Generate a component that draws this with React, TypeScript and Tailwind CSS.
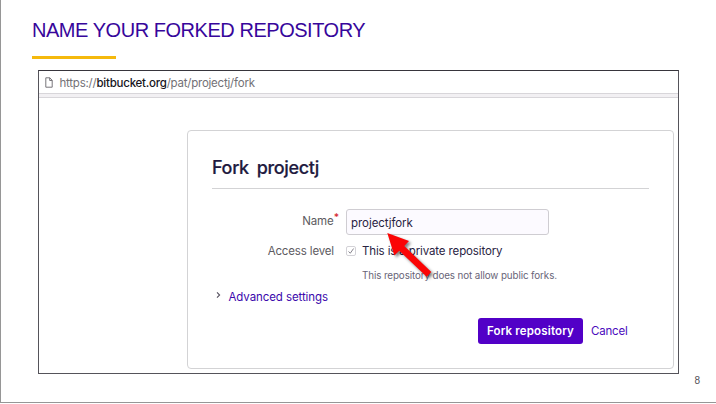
import React from "react";

function PageIcon() {
  return (
    <svg className="-mt-[2px] block h-[11px] w-2" viewBox="0 0 8 11" fill="none" stroke="#77757a" strokeWidth="1">
      <path d="M.8.8h4L7.2 3.3v6.9H.8z" />
      <path d="M4.7.8v2.7h2.5" />
    </svg>
  );
}

function PointerArrow() {
  return (
    <svg className="absolute top-[104px] left-[198px] h-[50px] w-[54px] overflow-visible drop-shadow-[2px_2px_1.5px_rgba(0,0,0,0.5)]" viewBox="0 0 54 50">
      <path d="M1.3 -2 L23 6 L18.3 11 L45.3 37 L40.7 41.8 L13.3 15.8 L8.3 20.5 Z" fill="#fb0505" />
    </svg>
  );
}

export default function App() {
  return (
    <main className="flex h-[403px] w-[716px] flex-col border-b border-l border-[#969696] bg-white font-['Inter',sans-serif]">
      <h1 className="mt-[18px] ml-[31px] h-6 font-['Liberation_Sans',sans-serif] text-[20px] leading-6 tracking-[-0.46px] whitespace-nowrap text-[#37069b]">
        NAME YOUR FORKED REPOSITORY
      </h1>
      <div className="mt-[14px] ml-[31px] h-[2.5px] w-[84px] shrink-0 bg-[#f5b90d]" />
      <section className="mt-[11.5px] ml-[37px] flex h-[304px] w-[641px] shrink-0 flex-col border border-[#55535a] border-t-[#37353c]">
        <div className="flex h-[22px] shrink-0 items-center gap-[6.5px] pt-[3px] pl-[6px] text-[11.5px] whitespace-nowrap text-[#737176]">
          <PageIcon />
          <span className="tracking-[-0.23px]">https://<b className="font-medium text-[#17151c]">bitbucket.org</b>/pat/projectj/fork</span>
        </div>
        <div className="h-[5px] shrink-0 border-y border-[#d8d6da] bg-[#f2f0f3]" />
        <form className="relative mt-8 ml-[148px] h-[239px] w-[487px] shrink-0 rounded-[4px] border border-[#d3d3d5] pt-[23px] pl-6" onSubmit={(e) => e.preventDefault()}>
          <h2 className="flex h-[35px] w-[437px] gap-[8px] border-b border-[#d3d3d5] text-[18px] leading-[28px] font-medium tracking-[-0.35px] text-[#211a40] [-webkit-text-stroke:0.2px_#211a40]">
            <span>Fork</span><span>projectj</span>
          </h2>
          <div className="mt-5 flex h-[26px]">
            <label className="flex w-[127px] justify-end text-[11.5px] leading-[25px] tracking-[-0.1px] text-[#5d5b61]">
              Name<span className="-mt-[4px] text-[10px] leading-6 font-semibold text-[#d72f38]">*</span>
            </label>
            <div className="ml-[7px] h-[26px] w-[203px] rounded-[3px] border border-[#cfcdd2] bg-[#fcfaff] pl-1 text-[11.5px] leading-[26px] tracking-[-0.05px] text-[#292342]">projectjfork</div>
          </div>
          <div className="mt-[7px] flex h-[18px] items-center text-[11.5px]">
            <span className="w-[122px] pt-[1.5px] text-right tracking-[-0.15px] text-[#5d5b61]">Access level</span>
            <span className="ml-[12px] flex size-[10px] items-center justify-center rounded-[2px] border border-[#d3d2d7]">
              <svg className="size-2" viewBox="0 0 8 8" fill="none" stroke="#88858e" strokeWidth="1"><path d="M1.5 4.5L3.3 6.2 6.6 1.5" /></svg>
            </span>
            <span className="ml-[6px] pt-[1.5px] tracking-[-0.13px] whitespace-nowrap text-[#292342]">This is a private repository</span>
          </div>
          <p className="mt-[7px] ml-[150px] h-4 text-[9.8px] leading-[18px] tracking-[-0.1px] whitespace-nowrap text-[#686477]">This repository does not allow public forks.</p>
          <div className="mt-[4px] flex h-[18px] items-center pl-[4px] text-[11.5px] text-[#3b08ac]">
            <svg className="-mt-[2px] h-2 w-[5px]" viewBox="0 0 5 8" fill="none" stroke="#56515f" strokeWidth="1.1"><path d="M1 1.4L3.6 4 1 6.6" /></svg>
            <span className="ml-[7.5px] pt-[3px] tracking-[-0.09px]">Advanced settings</span>
          </div>
          <div className="mt-[13px] ml-[266px] flex items-center gap-[8px] text-[11.5px]">
            <button className="h-[26px] w-[105px] rounded-[3px] bg-[#5200c7] pt-px font-semibold tracking-[0.15px] whitespace-nowrap text-white">Fork repository</button>
            <a className="pt-[2px] tracking-[-0.2px] text-[#4b0bbd]">Cancel</a>
          </div>
          <PointerArrow />
        </form>
      </section>
      <footer className="mr-[16px] mt-px text-right font-['Liberation_Sans',sans-serif] text-[10px] leading-3 text-[#545258]">8</footer>
    </main>
  );
}
